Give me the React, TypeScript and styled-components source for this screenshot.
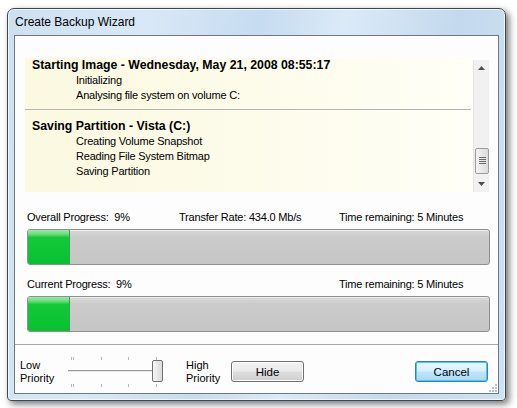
import React from 'react';
import styled, { createGlobalStyle } from 'styled-components';

const GlobalStyle = createGlobalStyle`
  html, body {
    margin: 0;
    padding: 0;
    background: #ffffff;
  }
  body {
    font-family: "Liberation Sans", Arial, sans-serif;
    font-size: 11px;
    color: #000;
  }
`;

interface LogGroup {
  title: string;
  lines: string[];
}

const groups: LogGroup[] = [
  {
    title: 'Starting Image - Wednesday, May 21, 2008 08:55:17',
    lines: ['Initializing', 'Analysing file system on volume C:'],
  },
  {
    title: 'Saving Partition - Vista (C:)',
    lines: ['Creating Volume Snapshot', 'Reading File System Bitmap', 'Saving Partition'],
  },
];

const App: React.FunctionComponent = () => {
  return (
    <Page>
      <GlobalStyle />
      <Window>
        <TitleBar>Create Backup Wizard</TitleBar>
        <Client>
          <LogSection>
            <LogBox>
              <LogContent>
                {groups.map((g, i) => (
                  <LogGroupBox key={g.title} first={i === 0}>
                    <LogTitle>{g.title}</LogTitle>
                    {g.lines.map((l) => (
                      <LogLine key={l}>{l}</LogLine>
                    ))}
                  </LogGroupBox>
                ))}
              </LogContent>
              <ScrollBar>
                <ScrollArrow>
                  <svg width="7" height="4" viewBox="0 0 7 4"><path d="M0 4 L3.5 0 L7 4 Z" fill="#4d4d4d" /></svg>
                </ScrollArrow>
                <ScrollTrack>
                  <ScrollThumb>
                    <svg width="7" height="8" viewBox="0 0 7 8">
                      <path d="M0 0.5 H7 M0 2.5 H7 M0 4.5 H7 M0 6.5 H7" stroke="#6b6b6b" strokeWidth="1" />
                    </svg>
                  </ScrollThumb>
                </ScrollTrack>
                <ScrollArrow>
                  <svg width="7" height="4" viewBox="0 0 7 4"><path d="M0 0 L3.5 4 L7 0 Z" fill="#4d4d4d" /></svg>
                </ScrollArrow>
              </ScrollBar>
            </LogBox>
          </LogSection>

          <ProgressSection>
            <ProgressLabels>
              <LabelCell width={152}>Overall Progress:&nbsp; 9%</LabelCell>
              <LabelCell width={160}>Transfer Rate: 434.0 Mb/s</LabelCell>
              <LabelCell>Time remaining: 5 Minutes</LabelCell>
            </ProgressLabels>
            <ProgressBar>
              <ProgressFill style={{ width: '9%' }} />
            </ProgressBar>

            <ProgressLabels>
              <LabelCell width={312}>Current Progress:&nbsp; 9%</LabelCell>
              <LabelCell>Time remaining: 5 Minutes</LabelCell>
            </ProgressLabels>
            <ProgressBar>
              <ProgressFill style={{ width: '9%' }} />
            </ProgressBar>
          </ProgressSection>

          <BottomBar>
            <PriorityLabel>Low<br />Priority</PriorityLabel>
            <Slider>
              <svg width="100" height="32" viewBox="0 0 100 32">
                <path d="M3.5 1 V4 M5.5 1 V4 M33.5 1 V4 M60.5 1 V4 M88.5 1 V4" stroke="#b8b8b8" strokeWidth="1" />
                <path d="M3.5 28 V31 M5.5 28 V31 M33.5 28 V31 M60.5 28 V31 M88.5 28 V31" stroke="#b8b8b8" strokeWidth="1" />
                <path d="M0 14.5 H90" stroke="#9a9a9a" strokeWidth="1" />
                <path d="M0 15.5 H90" stroke="#e6e6e6" strokeWidth="1" />
              </svg>
              <SliderThumb />
            </Slider>
            <PriorityLabel>High<br />Priority</PriorityLabel>
            <Button>Hide</Button>
            <Spacer />
            <Button primary>Cancel</Button>
            <Grip>
              <svg width="8" height="8" viewBox="0 0 8 8">
                <g fill="#b9c4cf">
                  <rect x="6" y="0" width="2" height="2" />
                  <rect x="3" y="3" width="2" height="2" />
                  <rect x="6" y="3" width="2" height="2" />
                  <rect x="0" y="6" width="2" height="2" />
                  <rect x="3" y="6" width="2" height="2" />
                  <rect x="6" y="6" width="2" height="2" />
                </g>
              </svg>
            </Grip>
          </BottomBar>
        </Client>
      </Window>
    </Page>
  );
};

const Page = styled.div`
  width: 517px;
  height: 408px;
  padding: 8px 0 0 7px;
  box-sizing: border-box;
  overflow: hidden;
`;

const Window = styled.div`
  width: 499px;
  height: 393px;
  box-sizing: border-box;
  border: 1px solid #3d4752;
  border-radius: 7px 7px 4px 4px;
  background: linear-gradient(100deg, #cde0f2 0%, #d9e8f6 25%, #c6dcf1 45%, #dbeaf7 60%, #c4d9ee 80%, #cfe2f3 100%);
  box-shadow: 3px 3px 7px rgba(0, 0, 0, 0.55), inset 0 0 0 1px rgba(255, 255, 255, 0.7);
  padding: 0 6px 6px 6px;
  display: flex;
  flex-direction: column;
`;

const TitleBar = styled.div`
  height: 26px;
  line-height: 26px;
  padding-left: 1px;
  font-size: 12px;
  color: #000;
`;

const Client = styled.div`
  flex: 1;
  background: #fdfdfd;
  border: 1px solid #6c7a88;
  display: flex;
  flex-direction: column;
  letter-spacing: -0.2px;
`;

const LogSection = styled.div`
  padding: 22px 9px 0 10px;
`;

const LogBox = styled.div`
  height: 134px;
  display: flex;
  background: linear-gradient(to right, #fbf9e0 0%, #fdfcec 55%, #fffff8 100%);
`;

const LogContent = styled.div`
  flex: 1;
  padding-right: 2px;
`;

const LogGroupBox = styled.div<{ first?: boolean }>`
  padding: ${({ first }) => (first ? '0 0 6px 7px' : '9px 0 0 7px')};
  border-bottom: ${({ first }) => (first ? '1px solid #b4b4b4' : 'none')};
`;

const LogTitle = styled.div`
  font-weight: bold;
  font-size: 12.3px;
  line-height: 15px;
  letter-spacing: 0;
`;

const LogLine = styled.div`
  padding-left: 44px;
  font-size: 11px;
  line-height: 15px;
`;

const ScrollBar = styled.div`
  width: 15px;
  margin-top: 2px;
  display: flex;
  flex-direction: column;
  background: #f1f1f1;
  border-left: 1px solid #e4e4e4;
`;

const ScrollArrow = styled.div`
  height: 16px;
  display: flex;
  align-items: center;
  justify-content: center;
`;

const ScrollTrack = styled.div`
  flex: 1;
  display: flex;
  flex-direction: column;
  justify-content: flex-end;
  padding-bottom: 2px;
`;

const ScrollThumb = styled.div`
  height: 24px;
  margin: 0 0 0 1px;
  border: 1px solid #9c9c9c;
  border-radius: 2px;
  background: linear-gradient(to right, #f4f4f4, #dcdcdc);
  display: flex;
  align-items: center;
  justify-content: center;
`;

const ProgressSection = styled.div`
  padding: 18px 8px 0 12px;
  display: flex;
  flex-direction: column;
`;

const ProgressLabels = styled.div`
  display: flex;
  height: 15px;
  line-height: 15px;
  margin-bottom: 4px;
  &:not(:first-child) {
    margin-top: 12px;
  }
`;

const LabelCell = styled.div<{ width?: number }>`
  width: ${({ width }) => (width ? `${width}px` : 'auto')};
  white-space: nowrap;
  font-size: 11px;
`;

const ProgressBar = styled.div`
  height: 36px;
  box-sizing: border-box;
  border: 1px solid #8f8f8f;
  border-radius: 3px;
  background: linear-gradient(to bottom, #d9d9d9 0%, #cbcbcb 20%, #c6c6c6 100%);
  box-shadow: inset 0 1px 0 #ededed;
  overflow: hidden;
`;

const ProgressFill = styled.div`
  height: 100%;
  background: linear-gradient(to bottom, #9be8a6 0%, #6fdc80 12%, #14c83a 22%, #06c22f 100%);
  border-right: 1px solid #3aa14f;
`;

const BottomBar = styled.div`
  position: relative;
  margin-top: 12px;
  border-top: 1px solid #a8a8a8;
  flex: 1;
  display: flex;
  align-items: center;
  padding: 5px 10px 0 5px;
`;

const PriorityLabel = styled.div`
  font-size: 11px;
  line-height: 13px;
  padding-top: 1px;
  width: 48px;
  letter-spacing: 0;
`;

const Slider = styled.div`
  position: relative;
  width: 100px;
  height: 32px;
  margin-right: 18px;
  svg {
    display: block;
  }
`;

const SliderThumb = styled.div`
  position: absolute;
  left: 84px;
  top: 4px;
  width: 9px;
  height: 20px;
  border: 1px solid #6f6f6f;
  border-radius: 2px;
  background: linear-gradient(to right, #f6f6f6, #dadada);
`;

const Button = styled.button<{ primary?: boolean }>`
  width: 73px;
  height: 21px;
  margin-left: ${({ primary }) => (primary ? '0' : '-3px')};
  font-family: "Liberation Sans", Arial, sans-serif;
  font-size: 11.5px;
  color: #000;
  border-radius: 3px;
  padding: 0;
  border: 1px solid ${({ primary }) => (primary ? '#3c7fb1' : '#707070')};
  background: ${({ primary }) =>
    primary
      ? 'linear-gradient(to bottom, #eaf6fd 0%, #d9f0fc 48%, #bee6fd 52%, #a7d9f5 100%)'
      : 'linear-gradient(to bottom, #f2f2f2 0%, #ebebeb 48%, #dddddd 52%, #cfcfcf 100%)'};
  box-shadow: inset 0 0 0 1px ${({ primary }) => (primary ? '#48c8f4' : '#fcfcfc')};
`;

const Spacer = styled.div`
  flex: 1;
`;

const Grip = styled.div`
  position: absolute;
  right: 1px;
  bottom: 1px;
  line-height: 0;
`;

export default App;
